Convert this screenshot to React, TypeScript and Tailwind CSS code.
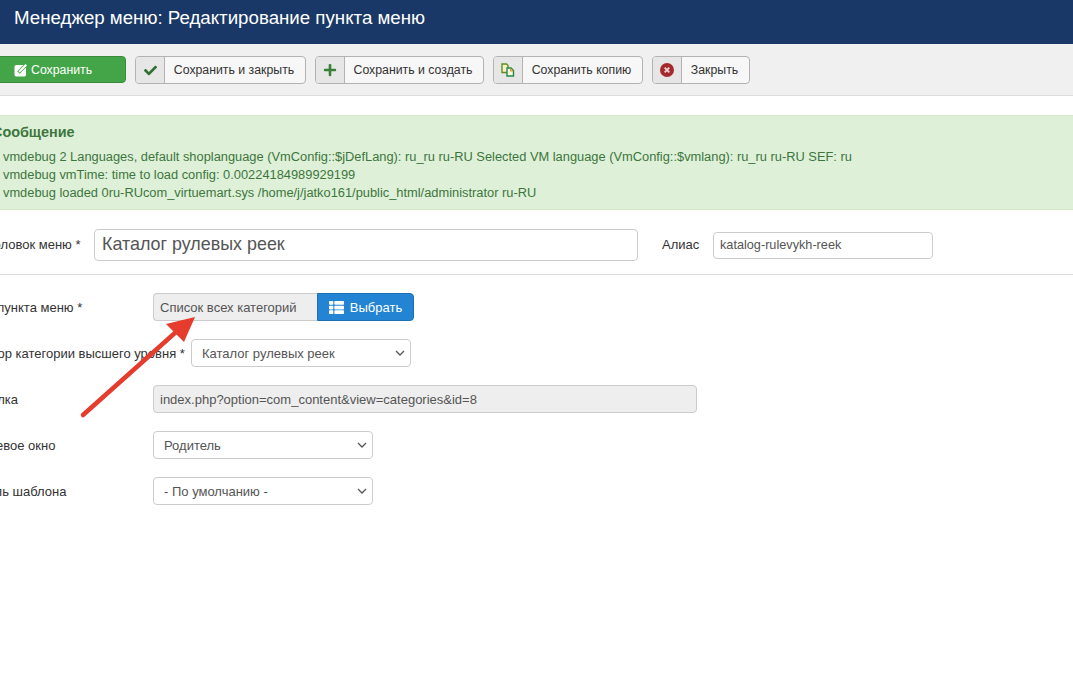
import { FaCheck, FaPlus, FaThList } from 'react-icons/fa'

const font = "font-['Liberation_Sans',Arial,sans-serif]"

function ToolButton({ icon, label, textWidth }: { icon: React.ReactNode; label: string; textWidth: string }) {
  return (
    <div className="flex h-[28px] items-stretch rounded-[4px] border border-[#b3b3b3] bg-[#f7f7f7] text-[12.3px] text-[#333]">
      <span className="flex w-[29px] items-center justify-center rounded-l-[3px] border-r border-[#b3b3b3] bg-[#e6e6e6]">{icon}</span>
      <span className={`flex items-center justify-center pr-[2px] ${textWidth}`}>{label}</span>
    </div>
  )
}

function EditIcon() {
  return (
    <svg width="14" height="14" viewBox="0 0 14 14" fill="none" className="mr-[3px]">
      <rect x="0.500" y="2" width="11.500" height="11.500" rx="1.800" fill="#fff" />
      <path d="M4.500 9.500L12 2" stroke="#43a548" strokeWidth="3.600" />
      <path d="M4.600 9.400L5 7.500L11.500 1L13 2.500L6.500 9Z" fill="#fff" />
    </svg>
  )
}

function CopyIcon() {
  return (
    <svg width="14" height="14" viewBox="0 0 14 14" fill="none">
      <path d="M1 1h4.500l1.500 1.500v7h-6z" stroke="#5f8f1f" strokeWidth="1.400" fill="#f6f0c8" />
      <path d="M6 5h4l2.500 2.500v5.500h-6.500z" stroke="#1f8a4a" strokeWidth="1.400" fill="#f9f6dc" />
      <path d="M9.500 5v3h3" stroke="#d98a1f" strokeWidth="1" />
    </svg>
  )
}

function CloseIcon() {
  return (
    <svg width="14" height="14" viewBox="0 0 14 14" fill="none">
      <circle cx="7" cy="7" r="7" fill="#a52a2e" />
      <path d="M4.700 4.700l4.600 4.600M9.300 4.700l-4.600 4.600" stroke="#f0d5d5" strokeWidth="1.800" />
    </svg>
  )
}

function Chevron() {
  return (
    <svg width="10" height="6" viewBox="0 0 10 6" fill="none" className="shrink-0">
      <path d="M1 1l4 4 4-4" stroke="#555" strokeWidth="1.300" />
    </svg>
  )
}

function FakeSelect({ value, width }: { value: string; width: string }) {
  return (
    <div className={`flex h-[28px] items-center justify-between rounded-[4px] border border-[#ccc] bg-white pl-[10px] pr-[5px] text-[13px] text-[#555] ${width}`}>
      <span className="pt-[1px]">{value}</span>
      <Chevron />
    </div>
  )
}

function Row({ label, labelWidth, children }: { label: string; labelWidth: string; children: React.ReactNode }) {
  return (
    <div className="flex items-center">
      <label className={`whitespace-nowrap pt-[2px] text-[13px] text-[#333] ${labelWidth}`}>{label}</label>
      {children}
    </div>
  )
}

export default function App() {
  return (
    <div className={`relative h-[688px] w-[1073px] overflow-hidden bg-white ${font}`}>
      <header className="flex h-[44px] items-center bg-[#1a3867] pb-[7px] pl-[14px] text-[18.700px] text-white">
        Менеджер меню: Редактирование пункта меню
      </header>

      <div className="flex h-[52px] items-start gap-[9px] border-b border-[#ddd] bg-[#f0f0f0] pt-[12px]">
        <div className="-ml-[10px] flex h-[27px] w-[136px] items-center rounded-[4px] border border-[#3a8a3c] bg-[#43a548] pl-[23px] pt-[1px] text-[12.300px] text-white">
          <EditIcon />
          Сохранить
        </div>
        <ToolButton icon={<FaCheck className="text-[13px] text-[#2f6f32]" />} label="Сохранить и закрыть" textWidth="w-[140px]" />
        <ToolButton icon={<FaPlus className="text-[14px] text-[#378137]" />} label="Сохранить и создать" textWidth="w-[138px]" />
        <ToolButton icon={<CopyIcon />} label="Сохранить копию" textWidth="w-[119px]" />
        <ToolButton icon={<CloseIcon />} label="Закрыть" textWidth="w-[67px]" />
      </div>

      <section className="mt-[19px] h-[95px] border-y border-[#d6e9c6] bg-[#dff0d8] pt-[7px] text-[#3c763d]">
        <h4 className="-ml-[8px] text-[14.400px] leading-[18px] font-bold">Сообщение</h4>
        <div className="mt-[7px] pl-[3px] text-[12.850px] leading-[17.900px]">
          <p>vmdebug 2 Languages, default shoplanguage (VmConfig::$jDefLang): ru_ru ru-RU Selected VM language (VmConfig::$vmlang): ru_ru ru-RU SEF: ru</p>
          <p>vmdebug vmTime: time to load config: 0.00224184989929199</p>
          <p>vmdebug loaded 0ru-RUcom_virtuemart.sys /home/j/jatko161/public_html/administrator ru-RU</p>
        </div>
      </section>

      <div className="-ml-[26px] mt-[19px] flex h-[46px] w-[1099px] items-start border-b border-[#ddd] pb-[14px]">
        <div className="flex h-[32px] items-center">
          <label className="w-[120px] whitespace-nowrap text-[13px] text-[#333]">Заголовок меню *</label>
          <input readOnly value="Каталог рулевых реек" className="h-[32px] w-[544px] rounded-[4px] border border-[#ccc] bg-white px-[7px] pb-[1px] text-[17.900px] text-[#555] outline-none" />
        </div>
        <div className="ml-[24px] flex h-[32px] items-center">
          <label className="w-[51px] text-[13px] text-[#333]">Алиас</label>
          <input readOnly value="katalog-rulevykh-reek" className="h-[27px] w-[220px] rounded-[4px] border border-[#ccc] bg-white px-[6px] text-[12.700px] text-[#555] outline-none" />
        </div>
      </div>

      <div className="-ml-[28px] mt-[18px] flex flex-col gap-[18px]">
        <Row label="Тип пункта меню *" labelWidth="w-[181px]">
          <div className="flex h-[28px] items-stretch text-[13px]">
            <span className="flex w-[164px] items-center rounded-l-[4px] border border-r-0 border-[#ccc] bg-[#eee] pl-[6px] pt-[1px] text-[#555]">Список всех категорий</span>
            <span className="flex w-[97px] items-center justify-center gap-[6px] rounded-r-[4px] border border-[#1c6fb5] bg-[#2384d3] text-white">
              <FaThList className="text-[15px]" />
              <span className="pt-[1px]">Выбрать</span>
            </span>
          </div>
        </Row>
        <Row label="Выбор категории высшего уровня *" labelWidth="w-[219px]">
          <FakeSelect value="Каталог рулевых реек" width="w-[220px]" />
        </Row>
        <Row label="Ссылка" labelWidth="w-[181px]">
          <div className="flex h-[28px] w-[544px] items-center rounded-[4px] border border-[#ccc] bg-[#eee] pl-[6px] pt-[1px] text-[13px] text-[#555]">
            index.php?option=com_content&amp;view=categories&amp;id=8
          </div>
        </Row>
        <Row label="Целевое окно" labelWidth="w-[181px]">
          <FakeSelect value="Родитель" width="w-[220px]" />
        </Row>
        <Row label="Стиль шаблона" labelWidth="w-[181px]">
          <FakeSelect value="- По умолчанию -" width="w-[220px]" />
        </Row>
      </div>

      {/* red annotation arrow drawn over the form */}
      <svg className="pointer-events-none absolute left-0 top-0" width="1073" height="688" viewBox="0 0 1073 688" fill="none">
        <path d="M83 415L176 332" stroke="#e53c2e" strokeWidth="4.500" strokeLinecap="round" />
        <path d="M195 317L166 324L184 342Z" fill="#e53c2e" />
      </svg>
    </div>
  )
}
